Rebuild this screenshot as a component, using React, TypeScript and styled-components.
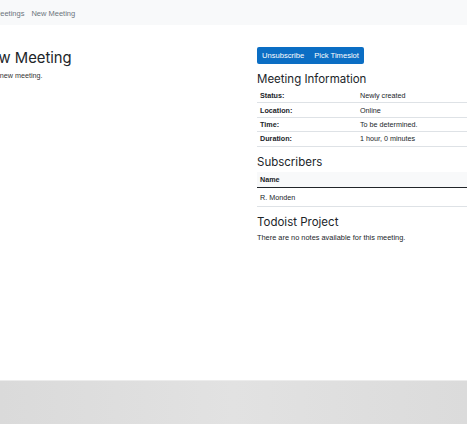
import styled, { createGlobalStyle } from "styled-components";

const GlobalStyle = createGlobalStyle`
    html, body {
        margin: 0;
        padding: 0;
        overflow: hidden;
        background: #fff;
    }
    body {
        font-family: "Liberation Sans", Arial, sans-serif;
        color: #212529;
    }
`;

const Screen = styled.div`
    width: 467px;
    height: 424px;
    display: flex;
    flex-direction: column;
    overflow: hidden;
`;

const Page = styled.div`
    height: 381px;
    display: flex;
    flex-direction: column;
    background: #fff;
    border-bottom: 1px solid #ececec;
    box-sizing: border-box;
`;

const NavBar = styled.nav`
    height: 24px;
    background: #f8f9fa;
    display: flex;
    align-items: center;
    gap: 7px;
    margin-left: -6px;
    padding-top: 1px;
    font-size: 7.5px;
`;

const NavLink = styled.a`
    color: #6c757d;
    text-decoration: none;
`;

const Content = styled.div`
    display: grid;
    grid-template-columns: 254px 240px;
    column-gap: 24px;
    margin-left: -21px;
    padding-top: 22px;
`;

const LeftColumn = styled.div`
    display: flex;
    flex-direction: column;
`;

const PageTitle = styled.h1`
    margin: 0;
    font-family: Inter, "Liberation Sans", Arial, sans-serif;
    font-size: 14.8px;
    font-weight: 400;
    line-height: 22px;
    color: #212529;
`;

const Lead = styled.p`
    margin: 2px 0 0;
    font-size: 7.2px;
    color: #333;
`;

const RightColumn = styled.div`
    display: flex;
    flex-direction: column;
`;

const ButtonGroup = styled.div`
    display: inline-flex;
    align-self: flex-start;
    background: #0b6ec4;
    border-radius: 2px;
    overflow: hidden;
`;

const Button = styled.button`
    border: none;
    background: transparent;
    color: #fff;
    font-family: inherit;
    font-size: 7.6px;
    height: 17px;
    padding: 0 5px;
    cursor: pointer;
`;

const SectionTitle = styled.h4<{ $top: number }>`
    margin: ${(p) => p.$top}px 0 3px;
    font-family: Inter, "Liberation Sans", Arial, sans-serif;
    font-size: 11.5px;
    font-weight: 400;
    line-height: 14px;
    color: #212529;
`;

const Table = styled.table`
    width: 240px;
    border-collapse: collapse;
    font-size: 7.2px;
`;

const Row = styled.tr`
    border-bottom: 1px solid #dee2e6;
`;

const HeadRow = styled.tr`
    background: #f8f9fa;
    border-bottom: 1.5px solid #212529;
`;

const Cell = styled.td<{ $label?: boolean; $tall?: boolean }>`
    height: ${(p) => (p.$tall ? "16px" : "13.4px")};
    padding: ${(p) => (p.$tall ? "2px 3px 0" : "0 3px")};
    font-weight: ${(p) => (p.$label ? 700 : 400)};
    color: #212529;
    width: ${(p) => (p.$label ? "94px" : "auto")};
`;

const HeadCell = styled.th`
    height: 15px;
    padding: 0 3px;
    text-align: left;
    font-weight: 700;
    color: #212529;
`;

const Note = styled.p`
    margin: 1px 0 0;
    font-size: 7.4px;
    color: #212529;
`;

const Footer = styled.div`
    flex: 1;
    background: linear-gradient(90deg, #dadada 0%, #e2e2e2 50%, #dbdbdb 100%);
`;

const info = [
    { label: "Status:", value: "Newly created" },
    { label: "Location:", value: "Online" },
    { label: "Time:", value: "To be determined." },
    { label: "Duration:", value: "1 hour, 0 minutes" },
];

export default function App() {
    return (
        <Screen>
            <GlobalStyle />
            <Page>
                <NavBar>
                    <NavLink href="#">Meetings</NavLink>
                    <NavLink href="#">New Meeting</NavLink>
                </NavBar>
                <Content>
                    <LeftColumn>
                        <PageTitle>New Meeting</PageTitle>
                        <Lead>Add a new meeting.</Lead>
                    </LeftColumn>
                    <RightColumn>
                        <ButtonGroup>
                            <Button>Unsubscribe</Button>
                            <Button>Pick Timeslot</Button>
                        </ButtonGroup>
                        <SectionTitle $top={8}>Meeting Information</SectionTitle>
                        <Table>
                            <tbody>
                                {info.map((item) => (
                                    <Row key={item.label}>
                                        <Cell $label>{item.label}</Cell>
                                        <Cell>{item.value}</Cell>
                                    </Row>
                                ))}
                            </tbody>
                        </Table>
                        <SectionTitle $top={8}>Subscribers</SectionTitle>
                        <Table>
                            <thead>
                                <HeadRow>
                                    <HeadCell>Name</HeadCell>
                                </HeadRow>
                            </thead>
                            <tbody>
                                <Row>
                                    <Cell $tall>R. Monden</Cell>
                                </Row>
                            </tbody>
                        </Table>
                        <SectionTitle $top={8}>Todoist Project</SectionTitle>
                        <Note>There are no notes available for this meeting.</Note>
                    </RightColumn>
                </Content>
            </Page>
            <Footer />
        </Screen>
    );
}
